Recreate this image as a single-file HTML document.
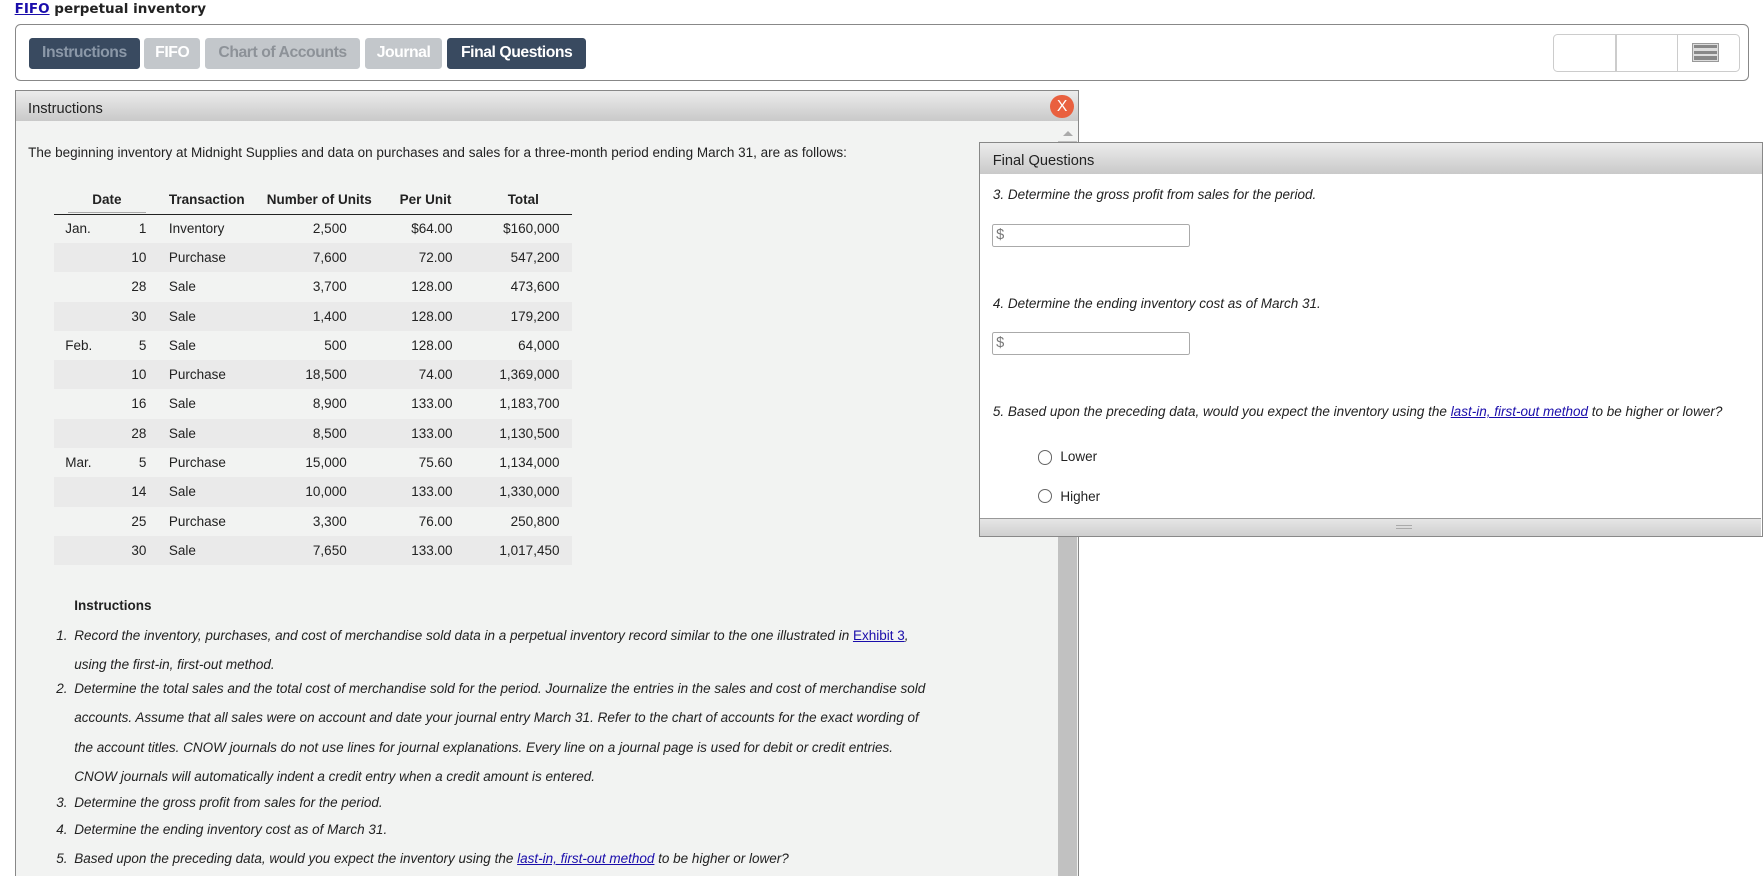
<!DOCTYPE html>
<html><head><meta charset="utf-8"><style>
html{zoom:1.1257;overflow:hidden;height:778px}
body{margin:0;width:1567px;height:778px;overflow:hidden;background:#fff;font-family:"Liberation Sans",Arial,sans-serif;color:#222;position:relative}
.a{position:absolute}
.title{left:13px;top:1px;font:bold 12px "DejaVu Sans",sans-serif;color:#222}
.title span{color:#1a0dab;text-decoration:underline}
.bar{left:13px;top:21px;width:1539px;height:49px;border:1px solid #888;border-radius:5px}
.tab{top:34px;height:27px;line-height:27px;font-weight:bold;font-size:14px;border-radius:3px;text-align:center;letter-spacing:-0.4px}
.dk{background:#394a60;color:#fff}
.lt{background:#c3c7cb;color:#fff}
.grp{left:1380px;top:30px;width:164px;height:32px;border:1px solid #ccc;border-radius:4px}
.pan{left:13px;top:80px;width:944px;height:698px;border:1px solid #888;border-bottom:none;background:#f2f3f2}
.hd{background:linear-gradient(#ececec,#c9c9c9);height:27px;line-height:32px;font-size:13px;padding-left:11px;color:#222}
.t{font-size:12px}
.row{left:48px;width:460px;height:26px;line-height:26px;font-size:12px}
.row.s{background:#eaeaea}
.row span{position:absolute}
.li{font-style:italic;font-size:12px}
a{color:#1a0dab}
.fq{left:870px;top:126px;width:694px;height:349px;border:1px solid #888;background:#fff}
.inp{width:176px;height:20px;border:1px solid #aaa;border-radius:2px;font-size:13px;color:#777;line-height:18px;padding-left:3px;box-sizing:border-box}
.rad{width:11px;height:11px;border:1px solid #666;border-radius:50%}
</style></head><body>
<div class="a title"><span>FIFO</span> perpetual inventory</div>
<div class="a bar"></div>
<div class="a tab dk" style="left:26px;width:98px;color:#8b98a8">Instructions</div>
<div class="a tab lt" style="left:128px;width:50px">FIFO</div>
<div class="a tab lt" style="left:182px;width:138px;color:#8d9298">Chart of Accounts</div>
<div class="a tab lt" style="left:324px;width:69px">Journal</div>
<div class="a tab dk" style="left:397px;width:124px">Final Questions</div>
<div class="a grp"></div>
<div class="a" style="left:1435px;top:31px;width:1px;height:32px;background:#ccc"></div>
<div class="a" style="left:1490px;top:31px;width:1px;height:32px;background:#ccc"></div>
<div class="a" style="left:1503px;top:38px;width:24px;height:17px;border:1px solid #999;background:#ddd;box-sizing:border-box"></div>
<div class="a" style="left:1505px;top:40px;width:20px;height:3px;background:#888"></div>
<div class="a" style="left:1505px;top:45px;width:20px;height:3px;background:#888"></div>
<div class="a" style="left:1505px;top:50px;width:20px;height:3px;background:#888"></div>

<div class="a pan"><div class="hd">Instructions</div></div>
<div class="a" style="left:933px;top:84px;width:21px;height:21px;border-radius:50%;background:#e9603f;color:#fff;text-align:center;line-height:21px;font-size:14px">X</div>
<div class="a" style="left:940px;top:125px;width:17px;height:653px;background:#c1c1c1"></div>
<div class="a" style="left:944px;top:116px;width:0;height:0;border-left:5px solid transparent;border-right:5px solid transparent;border-bottom:5px solid #aaa"></div>
<div class="a t" style="left:25px;top:129px">The beginning inventory at Midnight Supplies and data on purchases and sales for a three-month period ending March 31, are as follows:</div>

<div class="a" style="left:48px;top:171px;width:460px;font-size:12px;font-weight:bold">
<span class="a" style="left:34px">Date</span><span class="a" style="left:102px">Transaction</span><span class="a" style="left:189px">Number of Units</span><span class="a" style="left:307px">Per Unit</span><span class="a" style="left:403px">Total</span></div>
<div class="a" style="left:60px;top:188px;width:70px;height:1px;background:#aaa"></div>
<div class="a" style="left:48px;top:190px;width:460px;height:1px;background:#222"></div>

<div class="a row" style="top:190px"><span style="left:10px">Jan.</span><span style="right:378px">1</span><span style="left:102px">Inventory</span><span style="right:200px">2,500</span><span style="right:106px">$64.00</span><span style="right:11px">$160,000</span></div>
<div class="a row s" style="top:216px"><span style="right:378px">10</span><span style="left:102px">Purchase</span><span style="right:200px">7,600</span><span style="right:106px">72.00</span><span style="right:11px">547,200</span></div>
<div class="a row" style="top:242px"><span style="right:378px">28</span><span style="left:102px">Sale</span><span style="right:200px">3,700</span><span style="right:106px">128.00</span><span style="right:11px">473,600</span></div>
<div class="a row s" style="top:268px"><span style="right:378px">30</span><span style="left:102px">Sale</span><span style="right:200px">1,400</span><span style="right:106px">128.00</span><span style="right:11px">179,200</span></div>
<div class="a row" style="top:294px"><span style="left:10px">Feb.</span><span style="right:378px">5</span><span style="left:102px">Sale</span><span style="right:200px">500</span><span style="right:106px">128.00</span><span style="right:11px">64,000</span></div>
<div class="a row s" style="top:320px"><span style="right:378px">10</span><span style="left:102px">Purchase</span><span style="right:200px">18,500</span><span style="right:106px">74.00</span><span style="right:11px">1,369,000</span></div>
<div class="a row" style="top:346px"><span style="right:378px">16</span><span style="left:102px">Sale</span><span style="right:200px">8,900</span><span style="right:106px">133.00</span><span style="right:11px">1,183,700</span></div>
<div class="a row s" style="top:372px"><span style="right:378px">28</span><span style="left:102px">Sale</span><span style="right:200px">8,500</span><span style="right:106px">133.00</span><span style="right:11px">1,130,500</span></div>
<div class="a row" style="top:398px"><span style="left:10px">Mar.</span><span style="right:378px">5</span><span style="left:102px">Purchase</span><span style="right:200px">15,000</span><span style="right:106px">75.60</span><span style="right:11px">1,134,000</span></div>
<div class="a row s" style="top:424px"><span style="right:378px">14</span><span style="left:102px">Sale</span><span style="right:200px">10,000</span><span style="right:106px">133.00</span><span style="right:11px">1,330,000</span></div>
<div class="a row" style="top:450px"><span style="right:378px">25</span><span style="left:102px">Purchase</span><span style="right:200px">3,300</span><span style="right:106px">76.00</span><span style="right:11px">250,800</span></div>
<div class="a row s" style="top:476px"><span style="right:378px">30</span><span style="left:102px">Sale</span><span style="right:200px">7,650</span><span style="right:106px">133.00</span><span style="right:11px">1,017,450</span></div>

<div class="a t" style="left:66px;top:531px;font-weight:bold">Instructions</div>
<div class="a li" style="left:50px;top:558px">1.</div>
<div class="a li" style="left:66px;top:558px">Record the inventory, purchases, and cost of merchandise sold data in a perpetual inventory record similar to the one illustrated in <a style="font-style:normal" href="#">Exhibit 3</a>,</div>
<div class="a li" style="left:66px;top:584px">using the first-in, first-out method.</div>
<div class="a li" style="left:50px;top:605px">2.</div>
<div class="a li" style="left:66px;top:605px">Determine the total sales and the total cost of merchandise sold for the period. Journalize the entries in the sales and cost of merchandise sold</div>
<div class="a li" style="left:66px;top:631px">accounts. Assume that all sales were on account and date your journal entry March 31. Refer to the chart of accounts for the exact wording of</div>
<div class="a li" style="left:66px;top:657px">the account titles. CNOW journals do not use lines for journal explanations. Every line on a journal page is used for debit or credit entries.</div>
<div class="a li" style="left:66px;top:683px">CNOW journals will automatically indent a credit entry when a credit amount is entered.</div>
<div class="a li" style="left:50px;top:706px">3.</div><div class="a li" style="left:66px;top:706px">Determine the gross profit from sales for the period.</div>
<div class="a li" style="left:50px;top:730px">4.</div><div class="a li" style="left:66px;top:730px">Determine the ending inventory cost as of March 31.</div>
<div class="a li" style="left:50px;top:756px">5.</div><div class="a li" style="left:66px;top:756px">Based upon the preceding data, would you expect the inventory using the <a href="#">last-in, first-out method</a> to be higher or lower?</div>

<div class="a fq"><div class="hd" style="height:28px">Final Questions</div></div>
<div class="a li" style="left:882px;top:166px">3. Determine the gross profit from sales for the period.</div>
<div class="a inp" style="left:881px;top:199px">$</div>
<div class="a li" style="left:882px;top:263px">4. Determine the ending inventory cost as of March 31.</div>
<div class="a inp" style="left:881px;top:295px">$</div>
<div class="a li" style="left:882px;top:359px">5. Based upon the preceding data, would you expect the inventory using the <a href="#">last-in, first-out method</a> to be higher or lower?</div>
<div class="a rad" style="left:922px;top:400px"></div><div class="a t" style="left:942px;top:399px">Lower</div>
<div class="a rad" style="left:922px;top:434px"></div><div class="a t" style="left:942px;top:434px">Higher</div>
<div class="a" style="left:871px;top:460px;width:693px;height:15px;background:linear-gradient(#e6e6e6,#cfcfcf);border-top:1px solid #999"></div>
<div class="a" style="left:1240px;top:466px;width:14px;height:1px;background:#aaa"></div>
<div class="a" style="left:1240px;top:469px;width:14px;height:1px;background:#aaa"></div>
</body></html>
